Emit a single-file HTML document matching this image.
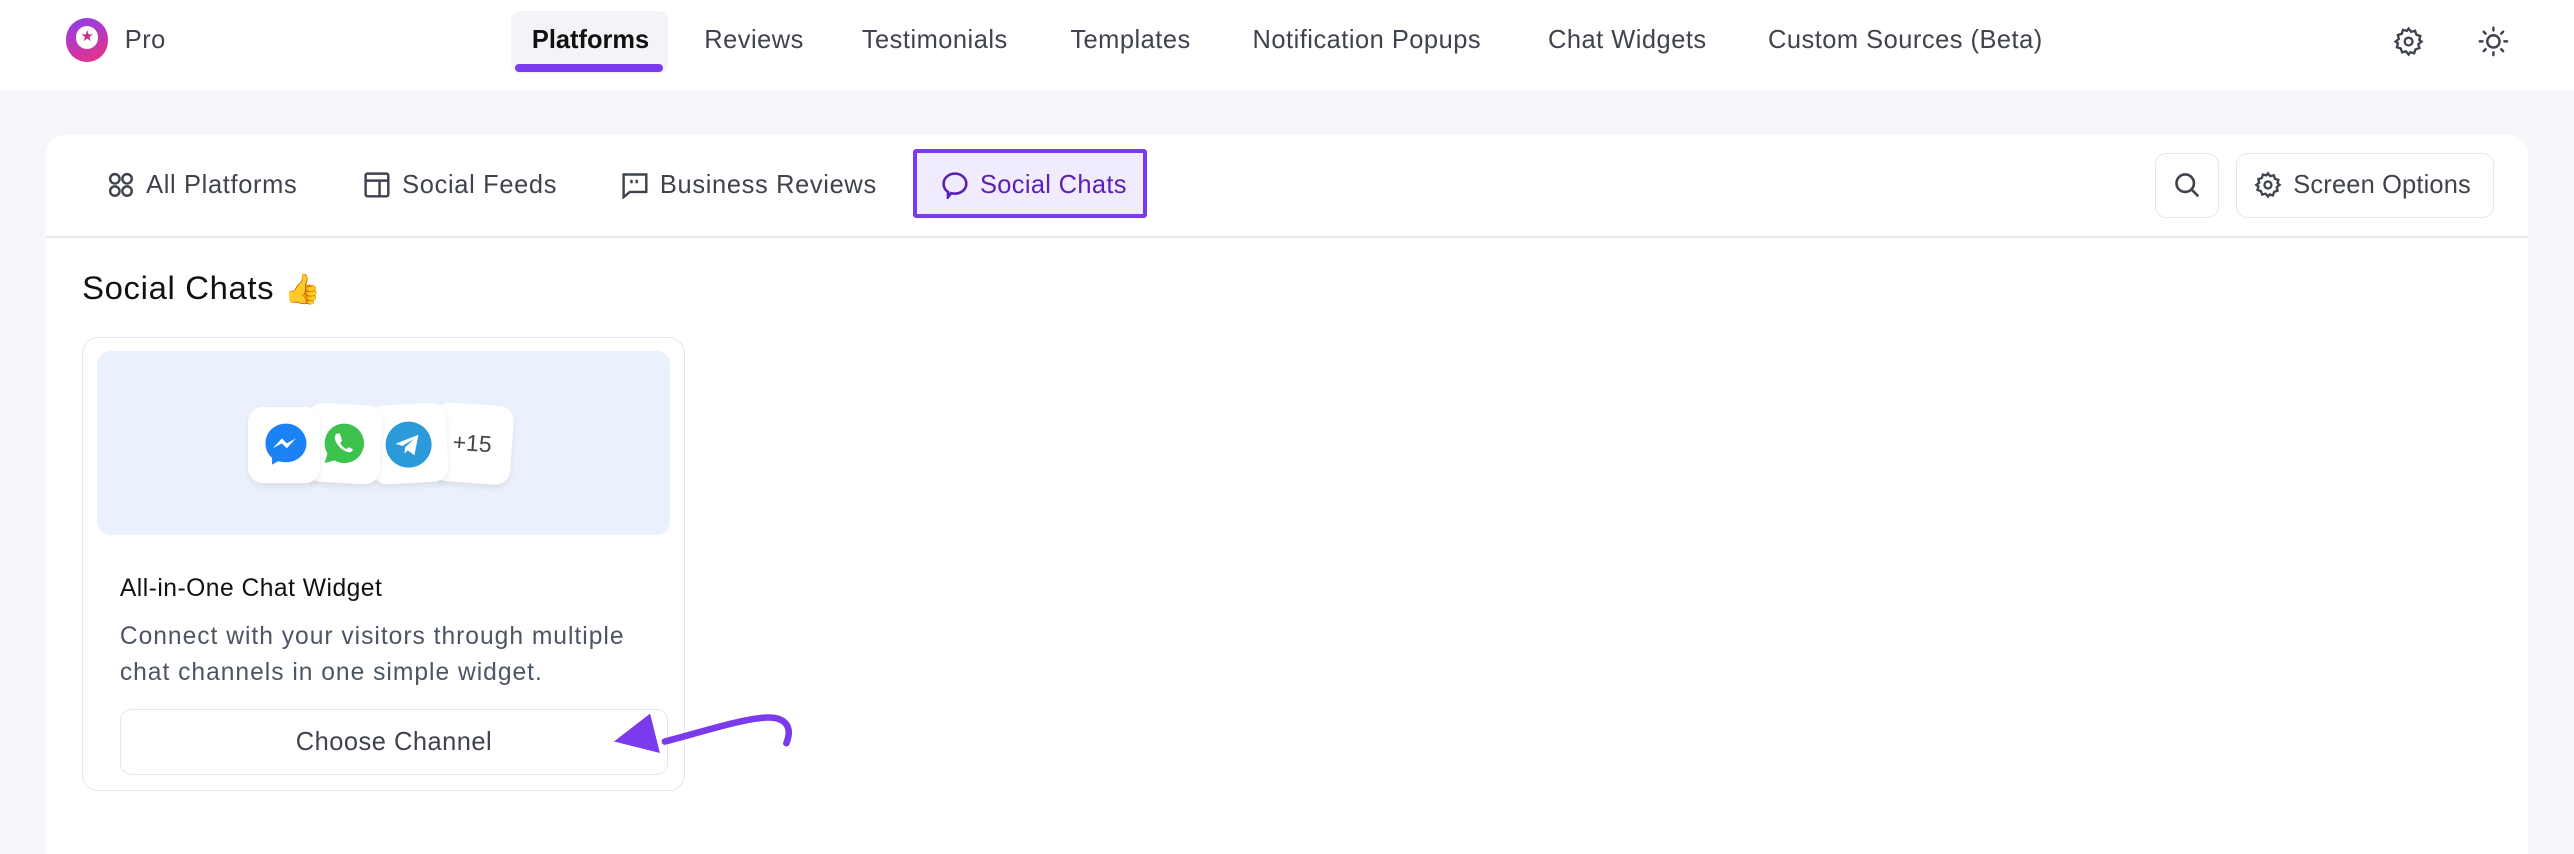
<!DOCTYPE html>
<html><head><meta charset="utf-8"><style>
*{box-sizing:border-box;margin:0;padding:0}
html,body{width:2574px;height:854px;overflow:hidden;background:#f6f7fa}
#w{zoom:1.6416;width:1568px;height:520px;position:relative;font-family:"Liberation Sans",sans-serif;color:#374151}
.top{position:absolute;left:0;top:0;width:1568px;height:55px;background:#fff}
.abs{position:absolute}
.nav{font-size:15.5px;color:#3f434d;top:16px;letter-spacing:.3px}
.panel{position:absolute;left:28px;top:82px;width:1512px;height:450px;background:#fff;border-radius:12px}
.tab{position:absolute;top:104px;font-size:15.5px;color:#3f434d;display:flex;align-items:center;gap:7px;letter-spacing:.4px}
svg{display:block}
</style></head><body><div id="w">
<div class="top">
 <div class="abs" style="left:40px;top:11px;width:26px;height:27px;border-radius:13px;background:linear-gradient(160deg,#8b3ff0,#f0317e)"></div>
 <div class="abs" style="left:46px;top:16px;width:14px;height:14px;border-radius:7px;background:#fff"></div>
 <div class="abs" style="left:49px;top:17px;font-size:9px;color:#c0308f">★</div>
 <div class="abs nav" style="left:76px">Pro</div>
 <div class="abs" style="left:311px;top:7px;width:96px;height:38px;background:#f3f4f7;border-radius:6px"></div>
 <div class="abs" style="left:314px;top:39px;width:90px;height:5px;background:#7c3aed;border-radius:3px"></div>
 <div class="abs nav" style="left:324px;color:#111;font-weight:bold;letter-spacing:0">Platforms</div>
 <div class="abs nav" style="left:429px">Reviews</div>
 <div class="abs nav" style="left:525px">Testimonials</div>
 <div class="abs nav" style="left:652px">Templates</div>
 <div class="abs nav" style="left:763px">Notification Popups</div>
 <div class="abs nav" style="left:943px">Chat Widgets</div>
 <div class="abs nav" style="left:1077px">Custom Sources (Beta)</div>
 <svg class="abs" style="left:1458px;top:16px" width="19" height="19" viewBox="0 0 24 24" fill="none" stroke="#3f434d" stroke-width="1.8"><circle cx="12" cy="12" r="3"/><path d="M12 2l2 2.5 3-.8 1 3 3 1-.8 3L22 12l-2.5 2 .8 3-3 1-1 3-3-.8L12 22l-2-2.5-3 .8-1-3-3-1 .8-3L2 12l2.5-2-.8-3 3-1 1-3 3 .8z"/></svg>
 <svg class="abs" style="left:1509px;top:15px" width="20" height="20" viewBox="0 0 24 24" fill="none" stroke="#3f434d" stroke-width="1.8" stroke-linecap="round"><circle cx="12" cy="12" r="4.5"/><path d="M12 2v2M12 20v2M2 12h2M20 12h2M4.9 4.9l1.4 1.4M17.7 17.7l1.4 1.4M4.9 19.1l1.4-1.4M17.7 6.3l1.4-1.4"/></svg>
</div>
<div class="panel"></div>
<div class="abs" style="left:28px;top:144px;width:1512px;height:1px;background:#e8e9ec"></div>
<div class="tab" style="left:65px"><svg width="17" height="17" viewBox="0 0 16 16" fill="none" stroke="#3f434d" stroke-width="1.4"><circle cx="4.5" cy="4.5" r="2.7"/><circle cx="11.5" cy="4.5" r="2.7"/><circle cx="4.5" cy="11.5" r="2.7"/><circle cx="11.5" cy="11.5" r="2.7"/></svg>All Platforms</div>
<div class="tab" style="left:221px"><svg width="17" height="17" viewBox="0 0 16 16" fill="none" stroke="#3f434d" stroke-width="1.4"><rect x="1.5" y="1.5" width="13" height="13" rx="1"/><path d="M1.5 5.5h13M9.5 5.5v9"/></svg>Social Feeds</div>
<div class="tab" style="left:378px"><svg width="17" height="17" viewBox="0 0 16 16" fill="none" stroke="#3f434d" stroke-width="1.4"><path d="M1.5 2h13v10H5l-3.5 3z"/><path d="M6 5v2M9 5v2"/></svg>Business Reviews</div>
<div class="abs" style="left:556px;top:91px;width:143px;height:42px;border:3px solid #7c3aed;background:#f1ecfd;border-radius:2px"></div>
<div class="tab" style="left:573px;color:#5b21b6;letter-spacing:.2px"><svg width="17" height="17" viewBox="0 0 16 16" fill="none" stroke="#5b21b6" stroke-width="1.5"><path d="M8 1.5c3.6 0 6.5 2.6 6.5 5.8S11.6 13 8 13c-.8 0-1.5-.1-2.2-.3L4 15v-3C2.5 11 1.5 9.3 1.5 7.3 1.5 4.1 4.4 1.5 8 1.5z"/></svg>Social Chats</div>
<div class="abs" style="left:1313px;top:93px;width:39px;height:40px;border:1px solid #e5e7eb;border-radius:7px"></div>
<svg class="abs" style="left:1324px;top:104px" width="17" height="17" viewBox="0 0 16 16" fill="none" stroke="#3f434d" stroke-width="1.5"><circle cx="7" cy="7" r="5"/><path d="M11 11l3.5 3.5"/></svg>
<div class="abs" style="left:1362px;top:93px;width:157px;height:40px;border:1px solid #e5e7eb;border-radius:7px"></div>
<div class="tab" style="left:1373px;letter-spacing:.1px"><svg width="17" height="17" viewBox="0 0 24 24" fill="none" stroke="#3f434d" stroke-width="2"><circle cx="12" cy="12" r="3"/><path d="M12 2l2 2.5 3-.8 1 3 3 1-.8 3L22 12l-2.5 2 .8 3-3 1-1 3-3-.8L12 22l-2-2.5-3 .8-1-3-3-1 .8-3L2 12l2.5-2-.8-3 3-1 1-3 3 .8z"/></svg>Screen Options</div>
<div class="abs" style="left:50px;top:164px;font-size:20px;color:#111;letter-spacing:.4px">Social Chats <span style="font-size:18px">👍</span></div>
<div class="abs" style="left:50px;top:205px;width:367px;height:277px;border:1px solid #e5e7eb;border-radius:10px"></div>
<div class="abs" style="left:59px;top:214px;width:349px;height:112px;background:#eaf1fd;border-radius:8px"></div>
<div class="abs" style="left:264px;top:246px;width:48px;height:48px;background:#fff;border-radius:9px;transform:rotate(4deg);box-shadow:0 2px 4px rgba(0,0,0,.08);font-size:14px;color:#444;padding:16px 0 0 12px">+15</div>
<div class="abs" style="left:226px;top:246px;width:46px;height:48px;background:#fff;border-radius:9px;transform:rotate(-3deg);box-shadow:0 2px 4px rgba(0,0,0,.08)"></div>
<div class="abs" style="left:187px;top:246px;width:45px;height:48px;background:#fff;border-radius:9px;transform:rotate(3deg);box-shadow:0 2px 4px rgba(0,0,0,.08)"></div>
<div class="abs" style="left:151px;top:248px;width:44px;height:46px;background:#fff;border-radius:9px;box-shadow:0 2px 4px rgba(0,0,0,.08)"></div>
<svg class="abs" style="left:160px;top:257px" width="28" height="28" viewBox="0 0 28 28"><path d="M14 1C6.8 1 1.5 6.3 1.5 13c0 3.6 1.5 6.7 4 8.8V26l3.8-2.1c1.5.4 3 .6 4.7.6 7.2 0 12.5-5.3 12.5-11.5S21.2 1 14 1z" fill="#1a82f5"/><path d="M6 16l5.5-6 3 3 5.5-3-5.5 6-3-3z" fill="#fff"/></svg>
<svg class="abs" style="left:197px;top:257px" width="26" height="26" viewBox="0 0 26 26"><path d="M13 1a12 12 0 0 0-10.3 18.2L1 25l6-1.6A12 12 0 1 0 13 1z" fill="#3cc24d"/><path d="M9 7c-1 0-2 1.2-1.8 2.8.4 3.5 4.5 8 8.5 8.6 1.4.2 2.5-.8 2.5-1.8l-2.6-1.3-1.3 1.2c-1.5-.6-3.3-2.4-3.8-3.8l1.1-1.3L10.3 7z" fill="#fff"/></svg>
<svg class="abs" style="left:234px;top:256px" width="30" height="30" viewBox="0 0 30 30"><circle cx="15" cy="15" r="14" fill="#2a9ad8"/><path d="M7 14.5l14-5.5-2.5 12.5-4-3-2 2 .3-3.8 5.5-5.2-7 4.3z" fill="#fff"/></svg>
<div class="abs" style="left:73px;top:350px;font-size:15px;color:#111;letter-spacing:.3px">All-in-One Chat Widget</div>
<div class="abs" style="left:73px;top:377px;font-size:15px;line-height:22px;color:#4b5563;letter-spacing:.6px">Connect with your visitors through multiple<br>chat channels in one simple widget.</div>
<div class="abs" style="left:73px;top:432px;width:334px;height:40px;border:1px solid #e5e7eb;border-radius:7px;text-align:center;line-height:39px;font-size:15.5px;color:#3f434d;letter-spacing:.3px">Choose Channel</div>
<svg class="abs" style="left:360px;top:420px" width="140" height="50" viewBox="0 0 140 50"><path d="M119 33c4-10 0-18-18-15-15 2-40 10-56 14" fill="none" stroke="#7c3aed" stroke-width="4" stroke-linecap="round"/><path d="M14 32L36 15l6 24z" fill="#7c3aed"/></svg>
</div></body></html>
